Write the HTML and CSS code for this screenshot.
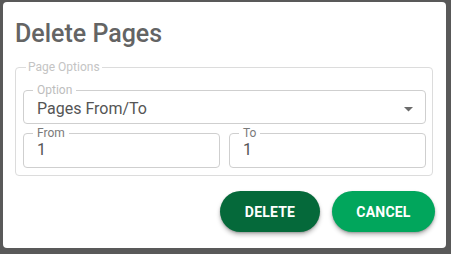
FILE: index.html
```html
<!DOCTYPE html>
<html>
<head>
<meta charset="utf-8">
<link rel="stylesheet" href="styles.css">
</head>
<body>
<div class="dialog">
  <h1 class="title">Delete Pages</h1>
  <fieldset class="group">
    <legend class="group-legend">Page Options</legend>
    <fieldset class="field field-select">
      <legend class="field-legend light">Option</legend>
      <div class="value-row">
        <span class="value">Pages From/To</span>
        <svg class="caret" width="9" height="5" viewBox="0 0 9 5"><path d="M0 0 L9 0 L4.5 4.5 Z" fill="#6b6b6b"/></svg>
      </div>
    </fieldset>
    <div class="row">
      <fieldset class="field">
        <legend class="field-legend">From</legend>
        <div class="value-row"><span class="value">1</span></div>
      </fieldset>
      <fieldset class="field">
        <legend class="field-legend">To</legend>
        <div class="value-row"><span class="value">1</span></div>
      </fieldset>
    </div>
  </fieldset>
  <div class="actions">
    <button class="btn btn-delete">Delete</button>
    <button class="btn btn-cancel">Cancel</button>
  </div>
</div>
</body>
</html>
```
FILE: styles.css
```css
html, body {
  margin: 0;
  padding: 0;
}
body {
  width: 451px;
  height: 254px;
  background: #595959;
  font-family: Roboto, "Liberation Sans", sans-serif;
  overflow: hidden;
}
.dialog {
  box-sizing: border-box;
  margin: 2px 0 0 3px;
  width: 443px;
  height: 246px;
  background: #fff;
  border-radius: 4px;
  padding: 18px 13px 0 12px;
}
.title {
  margin: 0;
  font-size: 25px;
  line-height: 28px;
  font-weight: 500;
  color: #646464;
}
.group {
  margin: 12px 0 0 0;
  padding: 0 6px 7px 7px;
  border: 1px solid #dcdcdc;
  border-radius: 4px;
  min-width: 0;
}
.group-legend {
  margin-left: 3px;
  padding: 0 2px;
  font-size: 12px;
  line-height: 14px;
  color: #c4c4c4;
}
.field {
  margin: 0;
  padding: 0 8px 0 13px;
  border: 1px solid #cfcfcf;
  border-radius: 4px;
  min-width: 0;
}
.field-select {
  margin-top: 9px;
}
.field-legend {
  margin-left: -4px;
  padding: 0 4px;
  font-size: 12px;
  line-height: 14px;
  color: #7a7a7a;
}
.field-legend.light {
  color: #bdbdbd;
}
.value-row {
  display: flex;
  align-items: flex-start;
  justify-content: space-between;
  height: 27px;
}
.field-select .value-row {
  height: 24px;
  padding-top: 2px;
}
.value {
  font-size: 16px;
  line-height: 19px;
  color: #555;
}
.caret {
  align-self: center;
  margin-right: 4px;
  margin-bottom: 3px;
}
.row {
  display: grid;
  grid-template-columns: 1fr 1fr;
  gap: 9px;
  margin-top: 2px;
}
.actions {
  display: flex;
  justify-content: flex-end;
  gap: 12px;
  margin-top: 15px;
  margin-right: -2px;
}
.btn {
  height: 41px;
  border: none;
  border-radius: 21px;
  color: #fff;
  font-family: Roboto, "Liberation Sans", sans-serif;
  font-size: 14px;
  font-weight: 700;
  text-transform: uppercase;
  letter-spacing: 0.2px;
  box-shadow: 0 3px 4px rgba(0,0,0,0.25), 0 1px 2px rgba(0,0,0,0.2);
}
.btn-delete {
  width: 100px;
  background: #05693a;
}
.btn-cancel {
  width: 103px;
  background: #01a65c;
}
```
